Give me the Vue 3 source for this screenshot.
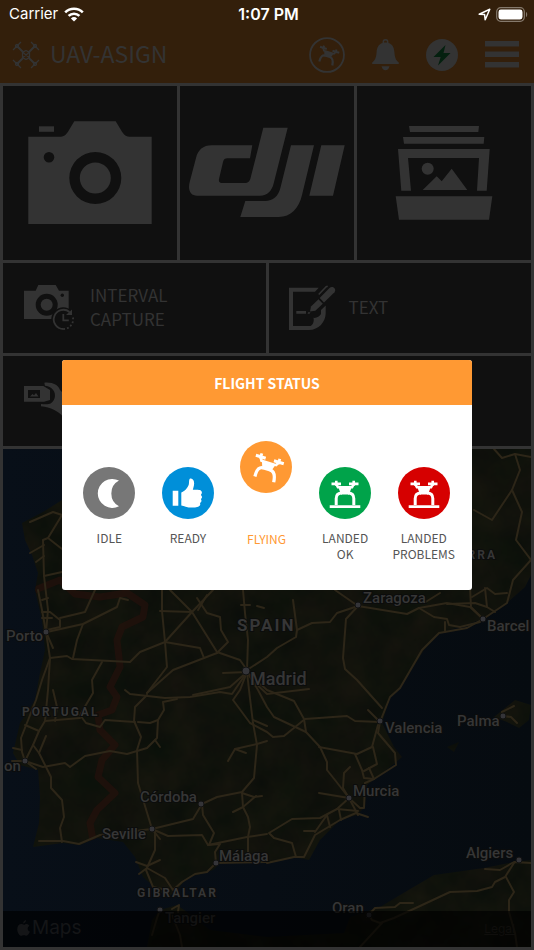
<script setup>
import { ref } from 'vue'

const statuses = [
  { id: 'idle', lines: ['IDLE'], color: '#777777' },
  { id: 'ready', lines: ['READY'], color: '#008fd9' },
  { id: 'flying', lines: ['FLYING'], color: '#ff9933' },
  { id: 'ok', lines: ['LANDED', 'OK'], color: '#00a34a' },
  { id: 'problems', lines: ['LANDED', 'PROBLEMS'], color: '#d60000' }
]
const current = ref('flying')

const cities = [
  { name: 'Porto', x: 6, y: 641, dot: [46, 632] },
  { name: 'Zaragoza', x: 363, y: 603, dot: [358, 605] },
  { name: 'Barcel', x: 487, y: 631, dot: [483, 619] },
  { name: 'Palma', x: 457, y: 726, dot: [503, 716] },
  { name: 'Valencia', x: 385, y: 733, dot: [380, 721] },
  { name: 'on', x: 4, y: 771, dot: [25, 761] },
  { name: 'Córdoba', x: 140, y: 802, dot: [201, 804] },
  { name: 'Seville', x: 102, y: 839, dot: [152, 829] },
  { name: 'Málaga', x: 219, y: 861, dot: [216, 863] },
  { name: 'Tangier', x: 165, y: 923, dot: [160, 910] },
  { name: 'Murcia', x: 353, y: 796, dot: [349, 798] },
  { name: 'Algiers', x: 466, y: 858, dot: [519, 860] },
  { name: 'Oran', x: 332, y: 913, dot: [369, 915] }
]

const roads = [
  '30,522 53,512 62,515 48,538 43,540 44,576 48,610 46,632 50,658 42,680 36,700 21,738 22,752 25,761',
  '48,538 62,549',
  '30,553 44,545',
  '36,562 44,556',
  '44,576 62,572 80,560',
  '38,590 42,610 46,632 53,648',
  '42,600 48,598',
  '42,612 50,612 60,620 60,627 47,630',
  '42,618 52,618',
  '60,618 85,612 95,590',
  '47,632 83,624 117,607 120,598 128,600',
  '83,624 77,640 73,658',
  '50,658 67,656 72,659 130,662 140,652 165,642 192,612 213,590',
  '50,658 48,690 45,721',
  '53,690 57,707 55,721',
  '102,662 92,680 93,693 80,715 86,723 100,727 105,720 135,722',
  '170,590 192,612 217,652 240,660 247,670',
  '162,590 162,611 165,642 167,667 147,693',
  '160,611 192,612',
  '197,598 207,613 220,617 221,630 228,642 217,653',
  '198,610 207,595',
  '165,642 200,648 204,658',
  '147,693 173,670 217,653',
  '243,590 245,613 248,640 247,670',
  '223,673 247,672 230,687 193,695',
  '241,605 250,605',
  '257,606 264,608',
  '247,670 267,657 277,648 296,637 297,630 293,600',
  '297,630 312,623 330,622 337,613 358,606',
  '335,590 358,606 407,614 419,608 447,603 470,607 483,619',
  '424,603 440,593',
  '419,608 434,617 447,619 449,625 460,627 480,622',
  '445,622 445,632',
  '358,606 346,619 343,658 345,669 357,680 382,708',
  '483,619 467,628 439,633 422,650 400,688 390,697 380,722',
  '483,619 507,603 513,580 531,560',
  '447,604 475,603 487,607',
  '470,587 471,607 483,619',
  '472,597 487,588 495,594 507,593',
  '485,588 487,607 495,612',
  '380,722 355,721 347,716 305,719 284,736 273,737 267,732 250,723 233,700 240,690 247,672',
  '247,672 258,690 267,707 274,717 306,732 320,747 327,762 327,770 335,780 349,798',
  '247,672 267,690 294,701 304,719 306,732',
  '309,689 267,694 252,680',
  '319,747 357,754 372,747 378,725',
  '368,710 380,722 378,733 395,753 396,765 374,779 364,778 362,770 355,754',
  '364,771 377,764 373,747',
  '369,768 374,779',
  '319,793 349,798 337,809 320,818 292,819 269,833 274,838 292,843 296,857',
  '304,831 315,831',
  '267,863 294,857 304,857 315,835 340,820 356,813 368,817',
  '349,798 358,815',
  '337,809 358,811',
  '349,798 360,808 364,808 365,783 374,779',
  '315,832 327,815 330,827',
  '339,810 341,820',
  '350,767 344,773 343,788 349,798',
  '485,869 500,870 514,862 531,863',
  '514,863 505,877 495,882 492,887 477,891 450,892 420,906 394,918 380,923 372,920 369,915',
  '506,877 514,892 509,900 509,912 515,933 517,947',
  '367,917 375,908 395,907 400,903 413,903',
  '382,923 360,947',
  '125,690 130,694 165,698 190,697 220,692 232,694 247,672',
  '147,695 135,707 134,721 141,737 137,750 138,783 152,829',
  '177,699 163,702 164,710 158,720 157,738 147,748 127,754 110,751 85,756 70,767 65,763 43,767 25,761',
  '138,722 150,723 158,720',
  '155,740 160,747',
  '45,721 80,718',
  '25,725 39,731 45,721',
  '39,731 33,745 25,761 36,769',
  '12,761 25,761',
  '13,748 22,750',
  '33,745 39,753 51,777 51,788 62,800 64,817 60,828 62,842',
  '39,753 46,736',
  '39,841 63,841 79,844 100,835 152,829',
  '152,829 193,819 202,804 217,797 242,792 254,778 257,745 253,723 249,690 247,672',
  '152,829 168,836 202,835 208,845 247,837 267,834',
  '202,804 203,815 214,833 209,845',
  '208,845 220,844 215,852 216,863',
  '155,830 155,850 146,870 153,887 162,889',
  '152,829 160,839',
  '136,862 147,866 160,860',
  '139,874 147,868 165,878 173,890 182,882 195,874 207,872 216,863 267,862',
  '228,761 235,749 257,744 267,741',
  '235,749 246,753',
  '242,793 243,807 248,817 250,827 248,837 248,852 258,862',
  '242,793 254,797 262,796',
  '233,812 243,807 256,796',
  '253,720 267,726',
  '172,909 179,905 178,912',
  '152,935 157,918 160,910',
  '172,915 180,935 182,947',
  '494,449 502,458 515,454 531,457',
  '515,454 520,470 512,490 522,512 516,540 531,560',
  '474,510 492,520 512,490',
  '502,712 514,706',
  '503,716 511,717 517,723'
]
</script>

<template>
  <div class="page">
    <svg class="defs" width="0" height="0" aria-hidden="true">
      <defs>
        <g id="drone-body">
          <path d="M12.5 15.5h9.5v2.8h-9.5zM30 15.5h9.5v2.8H30zM16 13.7h2.6v5H16zM33.4 13.7H36v5h-2.6z" />
          <path d="M16 17.5l2.2 3.900h1.600L22 27.500h8l2.200-6.100h1.600l2.200-3.900h-2.800l-1 1.600H19.800l-1-1.600z" />
        </g>
        <g id="drone-landed">
          <use href="#drone-body" />
          <path d="M23 26c-3.800 0-5.800 2-5.800 5.500V38M29 26c3.800 0 5.800 2 5.800 5.500V38" fill="none" stroke="currentColor" stroke-width="3" />
          <path d="M10.700 38.200h30.600V41H10.700z" />
        </g>
        <g id="drone-flying" transform="translate(1 2) rotate(17 26 26) scale(1.08) translate(-2 -2)">
          <use href="#drone-body" />
          <path d="M23 26c-4 0-6 2.500-5.600 10M29 26c4 0 6 3 6.600 10" fill="none" stroke="currentColor" stroke-width="3" />
        </g>
      </defs>
    </svg>

    <header class="header">
      <div class="status-bar">
        <div class="carrier">
          <span>Carrier</span>
          <svg width="20" height="15" viewBox="0 0 20 15">
            <g fill="none" stroke="#fff" stroke-width="2.600">
              <path d="M1.200 5.400a12.600 12.600 0 0 1 17.600 0" />
              <path d="M4.600 8.900a7.800 7.800 0 0 1 10.800 0" />
            </g>
            <path d="M10 14.600l-3.100-3.200a4.500 4.500 0 0 1 6.200 0z" fill="#fff" />
          </svg>
        </div>
        <div class="time">1:07 PM</div>
        <div class="battery">
          <svg width="13" height="13" viewBox="0 0 13 13">
            <path d="M1.200 6.200L11.800 1.200 7.200 11.800 6.600 6.600z" fill="none" stroke="#fff" stroke-width="1.500" stroke-linejoin="round" />
          </svg>
          <svg width="32" height="15" viewBox="0 0 32 15">
            <rect x="0.700" y="0.700" width="27.600" height="13.600" rx="4" fill="none" stroke="#85796c" stroke-width="1.200" />
            <rect x="2.500" y="2.500" width="24" height="10" rx="2.400" fill="#fff" />
            <path d="M30 5v5c1.600-.6 1.600-4.400 0-5z" fill="#85796c" />
          </svg>
        </div>
      </div>

      <div class="nav">
        <svg width="28" height="28" viewBox="0 0 28 28" fill="none" stroke="#333" stroke-width="1.300">
          <path d="M5 5l6.500 6.500M23 5l-6.500 6.500M5 23l6.500-6.500M23 23l-6.500-6.500" stroke-width="2" />
          <path d="M1 9l8-8M19 1l8 8M1 19l8 8M19 27l8-8" />
          <circle cx="5" cy="5" r="1.500" /><circle cx="23" cy="5" r="1.500" />
          <circle cx="5" cy="23" r="1.500" /><circle cx="23" cy="23" r="1.500" />
          <path d="M14 9.500l3.500 2v5L14 18.500l-3.500-2v-5zM11 11.500l6 5M17 11.500l-6 5" />
        </svg>
        <h1>UAV-ASIGN</h1>
        <div class="actions">
          <button type="button" aria-label="Flight status">
            <svg class="ink" width="36" height="36" viewBox="0 0 52 52">
              <circle cx="26" cy="26" r="24.500" fill="none" stroke="currentColor" stroke-width="2.600" />
              <use href="#drone-flying" />
            </svg>
          </button>
          <button type="button" aria-label="Notifications">
            <svg class="ink" width="27" height="32" viewBox="0 0 27 32">
              <path fill-rule="evenodd" d="M13.500 0a3 3 0 0 1 3 3v1c4.300 1.300 5.600 5 5.900 9 .3 5 1.200 8 4.400 10.600V25H.2v-1.400C3.400 21 4.300 18 4.600 13c.3-4 1.600-7.700 5.900-9V3a3 3 0 0 1 3-3zm0 1.500A1.500 1.500 0 0 0 12 3v.6h3V3a1.500 1.500 0 0 0-1.500-1.500zM9.500 27.300h8c-.6 2.400-2 4-4 4s-3.400-1.600-4-4z" />
            </svg>
          </button>
          <button type="button" aria-label="Connection">
            <svg class="ink" width="32" height="32" viewBox="0 0 32 32">
              <circle cx="16" cy="16" r="16" />
              <path d="M19.500 6L7.500 18h7.200L12 26.500 24.500 14h-7z" fill="#04200f" />
            </svg>
          </button>
          <button type="button" aria-label="Menu">
            <svg class="ink" width="34" height="27" viewBox="0 0 34 27">
              <path d="M0 0h34v5.500H0zM0 10.500h34V16H0zM0 21h34v5.500H0z" />
            </svg>
          </button>
        </div>
      </div>
    </header>

    <main class="board">
      <div class="row row-3">
        <button type="button" class="tile square" aria-label="Camera">
          <svg class="ink" viewBox="0 0 174 174">
            <path fill-rule="evenodd" d="M25.300 50.700H56c5 0 7-2 9-5l6.300-10.400h41.400L119 45.700c2 3 4 5 9 5h20.700V138H25.300zM92.300 66a26 26 0 1 0 0 52 26 26 0 0 0 0-52zM46 66a5.300 5.300 0 1 0 0 10.600A5.300 5.300 0 0 0 46 66z" />
            <circle cx="92.300" cy="92" r="15.500" />
            <path d="M36 40.300h15v5.500H36z" />
          </svg>
        </button>
        <button type="button" class="tile square" aria-label="DJI">
          <svg class="ink" viewBox="0 0 174 174">
            <path d="M72.300 59.300H31.700C23 59.300 18 64 16 72L9.700 96c-2 8 .5 13.700 7.500 13.700H80c7.500 0 12-5 13.700-12.400l14-55.600H83.300L70.700 91.500c-1 4-2.500 5.500-6 5.500H42.500c-3 0-4-1.500-3.500-4l4-17c.7-2.700 2-3.700 4.500-3.700H70z" />
            <path d="M65.300 115l-5 16h38.400c12 0 20.300-9 23.300-22l12-49.700h-23l-10.700 43c-2 8-7 12.700-15.300 12.700zM141.300 59.300h23.400L153 109.700h-23.700z" />
          </svg>
        </button>
        <button type="button" class="tile square" aria-label="Gallery">
          <svg class="ink" viewBox="0 0 174 174">
            <path d="M52 40h70l-.7 6H53zM46 51h81.300l-.6 6.700H47z" />
            <path d="M41 63h91.700l-3 41.700H120L122 72H51l3 32.700h-9.700z" />
            <circle cx="70.700" cy="82.700" r="6" />
            <path d="M65.700 104l14-13.700 5 5 10-12.600L110.300 104z" />
            <path d="M38.700 110.300h96.600l-3.300 23.400H42z" />
          </svg>
        </button>
      </div>

      <div class="row row-2">
        <button type="button" class="tile wide">
          <svg class="ink" width="50" height="46" viewBox="0 0 50 46">
            <path d="M0 5.700h11.700L14.300 0h17.400L35 5.700h9.700V34H0z" />
            <circle cx="22.700" cy="19.700" r="11" class="hole" />
            <circle cx="22.700" cy="19.700" r="6" />
            <circle cx="38.300" cy="10.300" r="1.700" class="hole" />
            <circle cx="39.300" cy="34.300" r="12" class="hole" />
            <g fill="none" stroke="currentColor" stroke-width="1.800">
              <path d="M45.500 27a9.600 9.600 0 1 0-6 17" />
              <path d="M39.300 44a9.600 9.600 0 0 0 9.500-12" stroke-dasharray="1.800 2" />
              <path d="M39.300 29v6.400h5.500" />
            </g>
            <path d="M48 24.500v5.500h-6z" />
          </svg>
          <span>INTERVAL<br>CAPTURE</span>
        </button>
        <button type="button" class="tile wide compact">
          <svg class="ink" width="48" height="46" viewBox="0 0 48 46">
            <path fill-rule="evenodd" d="M29.700 2.700H0V45h20c9.500 0 16.700-8 16.700-17v-7.500L32 25v4c-1.500 2.600-4.500 4.300-7.500 3.800.8 4-.6 7-3 8.200H4V6.700h22z" />
            <path d="M7.300 26H17v2.700H7.300zM19.500 27l2 .5-1 1.300h-2z" />
            <path d="M21 26.500l1-5 7.500-7.200 4.300 4.500-7.500 7z" />
            <path d="M30.700 13L40.500 3c3-2.700 7.500.8 5 4.300L35 17.600z" />
            <path d="M29.700 9.500l7.500-7.800 1.500-.5" fill="none" stroke="currentColor" stroke-width="1.500" />
          </svg>
          <span>TEXT</span>
        </button>
      </div>

      <div class="row row-1">
        <button type="button" class="tile wide" aria-label="Media capture">
          <svg class="ink" width="50" height="38" viewBox="0 0 50 38">
            <path fill-rule="evenodd" d="M0 4h19.300L26 8v10l-6 1.700H0zM4 8v8h12V8z" />
            <path d="M6 14.500l2.500-2.500 1.500 1.200 2-2.200 2.500 3.500z" />
            <path d="M20.300.7C29 0 34 3 36 8l14 14v16l-11-3.300C34 29 27 25.500 17 24.300V22c4 .3 8 .5 10-.7 5-3.500 5.500-11 .5-15-2-1.600-4-2.300-6.500-2.600z" />
          </svg>
        </button>
      </div>

      <section class="map">
        <svg class="map-canvas" viewBox="3 449 528 498" preserveAspectRatio="xMidYMid slice">
          <defs>
            <linearGradient id="sea" x1="0" y1="0" x2="1" y2="0">
              <stop offset="0" stop-color="#080f18" />
              <stop offset="1" stop-color="#060b10" />
            </linearGradient>
            <filter id="terrain" x="0" y="0" width="100%" height="100%" color-interpolation-filters="sRGB">
              <feTurbulence type="fractalNoise" baseFrequency="0.03" numOctaves="5" seed="8" />
              <feColorMatrix values="0.06 0 0 0 0.032  0.03 0.02 0 0 0.044  0.02 0 0 0 0.034  0 0 0 0 1" />
            </filter>
            <clipPath id="land-clip">
              <path d="M62 500L43 512 22 523 25 540 32 555 38 573 35 590 42 620 45 650 40 673 35 700 20 723 16 740 13 753 20 765 38 770 40 797 39 823 33 847 63 843 80 845 97 838 123 842 135 857 143 877 167 898 177 890 187 878 213 870 220 863 267 863 294 857 309 860 320 840 340 820 357 815 365 807 367 785 395 763 402 757 394 747 382 723 390 697 400 688 424 650 440 633 480 620 507 603 525 587 531 575V449H472L300 470z" />
              <path d="M147 947L152 920 160 910 177 905 187 912 210 930 267 937 344 933 350 917 380 907 400 895 434 875 484 868 514 862 531 860V947z" />
              <path d="M494 717L515 700 531 705 529 720 519 728 507 722zM447 747L459 742 454 752z" />
            </clipPath>
          </defs>
          <rect x="3" y="449" width="528" height="498" fill="url(#sea)" />
          <g clip-path="url(#land-clip)">
            <rect x="3" y="449" width="528" height="498" fill="#11120c" filter="url(#terrain)" />
            <path class="border-line" d="M35 590L60 580 75 594 100 597 127 593 145 605 143 617 122 627 117 640 120 667 110 687 117 697 112 710 98 715 100 730 115 745 102 760 98 777 115 793 97 810 90 823 93 840" />
          </g>
          <g class="roads">
            <polyline v-for="road in roads" :key="road" :points="road" />
          </g>
          <g class="labels">
            <g v-for="city in cities" :key="city.name">
              <circle :cx="city.dot[0]" :cy="city.dot[1]" r="3" />
              <text :x="city.x" :y="city.y">{{ city.name }}</text>
            </g>
            <circle cx="246" cy="671" r="4" />
            <text class="capital" x="250" y="685">Madrid</text>
            <text class="country large" x="237" y="631">SPAIN</text>
            <text class="country" x="22" y="716">PORTUGAL</text>
            <text class="country" x="137" y="897">GIBRALTAR</text>
            <text class="country" x="497" y="559" text-anchor="end">RRA</text>
          </g>
        </svg>
        <div class="map-bar">
          <div class="apple">
            <svg width="13" height="16" viewBox="0 0 13 16">
              <path d="M9 0c.2 1.800-1.200 3.400-2.800 3.400C6 1.800 7.400.2 9 0zM9.200 4c1.400 0 2.500.7 3.200 1.700-2.500 1.500-2.100 4.900.5 5.900-.6 1.800-2 4.200-3.400 4.200-1 0-1.400-.6-2.700-.6s-1.700.6-2.600.6C2.500 15.800.2 12.500.2 9.200.2 6 2.200 4.100 4.200 4.100c1.200 0 2 .7 2.800.7.800 0 1.300-.8 2.200-.8z" />
            </svg>
            <span>Maps</span>
          </div>
          <a href="#legal">Legal</a>
        </div>
      </section>
    </main>

    <div class="overlay">
      <section class="modal" role="dialog" aria-labelledby="modal-title">
        <h2 id="modal-title">FLIGHT STATUS</h2>
        <div class="statuses">
          <button
            v-for="item in statuses"
            :key="item.id"
            type="button"
            class="status"
            :class="{ active: current === item.id }"
            @click="current = item.id"
          >
            <svg width="52" height="52" viewBox="0 0 52 52">
              <circle cx="26" cy="26" r="26" :fill="item.color" />
              <path v-if="item.id === 'idle'" d="M36 13.600A14.500 14.500 0 1 0 36 39.300A14.600 14.600 0 0 1 36 13.600z" />
              <g v-else-if="item.id === 'ready'">
                <path d="M10.700 23.700h5.600v15h-5.600z" />
                <path d="M19.300 25.500c3-1 6.500-4.500 7.500-8 .4-2 0-4.500 1-5.700 1.200-1 3.300.2 4 2.200 1 3-.3 6-1 8.800 3 .2 6.200-.4 8 .8 1.600 1.200 1.400 3.200 0 4.300 1.700 1 1.600 3.300 0 4.200 1.200 1.300.8 3.200-.8 4 .7 1.600 0 3.200-1.800 3.600-4 1.200-9 1.200-12.500 0-1.500-.6-3-1.200-4.400-1.300z" />
              </g>
              <use v-else-if="item.id === 'flying'" href="#drone-flying" />
              <use v-else href="#drone-landed" />
            </svg>
            <span class="status-label">
              <span v-for="line in item.lines" :key="line">{{ line }}</span>
            </span>
          </button>
        </div>
      </section>
    </div>
  </div>
</template>

<style>
body {
  background: #333;
}
</style>

<style scoped>
.page {
  display: flex;
  flex-direction: column;
  min-height: 100vh;
  background: #333;
  font-family: 'Noto Sans CJK SC', 'Noto Sans', sans-serif;
}

.defs {
  position: absolute;
}

button {
  padding: 0;
  border: 0;
  background: none;
  font-family: inherit;
  cursor: pointer;
}

svg {
  display: block;
  flex-shrink: 0;
}

.ink {
  color: #333;
  fill: #333;
}

.hole {
  fill: #101010;
}

.header {
  padding-bottom: 2px;
  background: #331f0b;
}

.status-bar {
  display: grid;
  grid-template-columns: 1fr auto 1fr;
  align-items: center;
  height: 28px;
  padding: 0 6px 0 9px;
  color: #fff;
  font-family: Inter, sans-serif;
  font-size: 15px;
  line-height: 20px;
}

.carrier {
  display: flex;
  align-items: center;
  gap: 6px;
}

.time {
  font-size: 16px;
  font-weight: 600;
}

.battery {
  display: flex;
  align-items: center;
  justify-content: flex-end;
  gap: 5px;
}

.nav {
  display: flex;
  align-items: center;
  height: 53px;
  padding: 0 15px 0 12px;
}

h1 {
  margin: 0 0 0 10px;
  padding-bottom: 4px;
  color: #333;
  font-size: 23px;
  font-weight: 400;
  line-height: 32px;
}

.actions {
  display: flex;
  align-items: center;
  gap: 27px;
  margin-left: auto;
}

.board {
  display: flex;
  flex: 1;
  flex-direction: column;
  gap: 3px;
  padding: 3px;
}

.row {
  display: grid;
  gap: 3px;
}

.row-3 {
  grid-template-columns: repeat(3, 1fr);
}

.row-2 {
  grid-template-columns: repeat(2, 1fr);
}

.tile {
  background: #101010;
  color: #333;
}

.square {
  aspect-ratio: 1;
}

.square svg {
  width: 100%;
}

.wide {
  display: flex;
  align-items: center;
  gap: 16px;
  height: 90px;
  padding: 0 21px;
  font-size: 17px;
  line-height: 24px;
  text-align: left;
}

.wide span {
  padding-bottom: 2px;
}

.compact {
  gap: 12px;
  padding: 0 20px;
}

.map {
  position: relative;
  flex: 1;
  min-height: 400px;
  overflow: hidden;
}

.map-canvas {
  position: absolute;
  inset: 0;
  width: 100%;
  height: 100%;
}

.border-line {
  fill: none;
  stroke: #28110b;
  stroke-width: 7;
  stroke-linejoin: round;
  opacity: 0.6;
}

.roads {
  fill: none;
  stroke: #2d2618;
  stroke-width: 2;
  stroke-linejoin: round;
  stroke-linecap: round;
}

.labels circle {
  fill: #343438;
  stroke: #121212;
  stroke-width: 1;
}

.labels text {
  fill: #363636;
  stroke: #0b0c0c;
  stroke-width: 2px;
  paint-order: stroke;
  font-family: Roboto, sans-serif;
  font-size: 15px;
  font-weight: 500;
}

.labels .capital {
  font-size: 18px;
}

.labels .country {
  font-size: 12px;
  font-weight: 700;
  letter-spacing: 2px;
}

.labels .large {
  font-size: 17px;
}

.map-bar {
  position: absolute;
  right: 0;
  bottom: 0;
  left: 0;
  display: flex;
  align-items: center;
  justify-content: space-between;
  box-sizing: border-box;
  height: 36px;
  padding: 0 16px 2px 14px;
  background: rgba(0, 0, 0, 0.65);
  color: #141517;
  font-family: Inter, sans-serif;
}

.apple {
  display: flex;
  align-items: center;
  gap: 2px;
  fill: #141517;
  font-size: 19px;
  line-height: 24px;
}

.map-bar a {
  color: #0f0e0c;
  font-size: 12px;
}

.overlay {
  position: fixed;
  inset: 0;
  display: flex;
  align-items: center;
  justify-content: center;
  padding: 0 62px;
}

.modal {
  width: 100%;
  overflow: hidden;
  border-radius: 3px;
  background: #fff;
}

h2 {
  margin: 0;
  padding: 11px 0 10px;
  background: #ff9933;
  color: #fff;
  font-size: 14px;
  font-weight: 700;
  line-height: 24px;
  text-align: center;
}

.statuses {
  display: grid;
  grid-template-columns: repeat(5, 1fr);
  align-items: start;
  min-height: 185px;
  padding: 0 9px 0 8px;
  box-sizing: border-box;
}

.status {
  display: flex;
  flex-direction: column;
  align-items: center;
  gap: 11px;
  padding-top: 62px;
  color: #555;
  font-size: 12px;
  line-height: 16px;
  text-align: center;
}

.status svg {
  color: #fff;
  fill: #fff;
}

.status-label {
  display: flex;
  flex-direction: column;
}

.status.active {
  gap: 38px;
  padding-top: 36px;
  color: #ff9933;
}
</style>
